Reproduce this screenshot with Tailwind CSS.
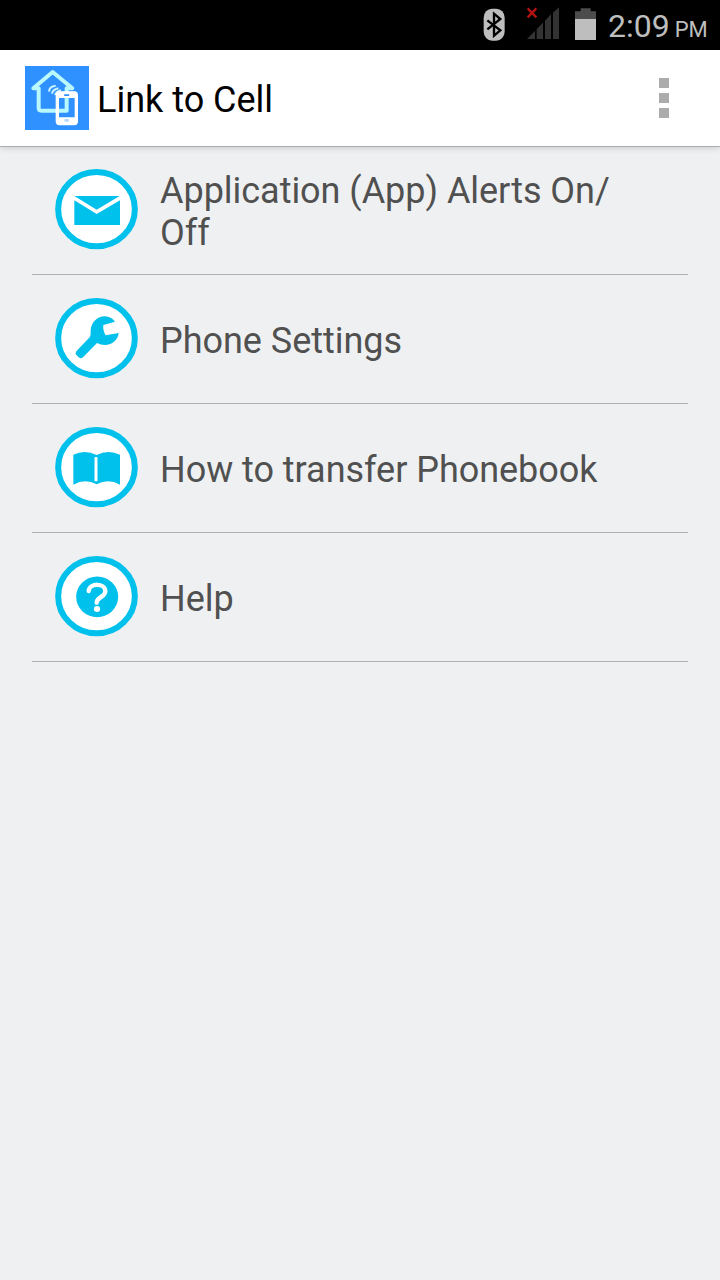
<!DOCTYPE html>
<html lang="en">
<head>
  <meta charset="UTF-8" />
  <meta name="viewport" content="width=device-width, initial-scale=1.0" />
  <title>Link to Cell</title>
  <script src="https://cdn.jsdelivr.net/npm/@tailwindcss/browser@4"></script>
</head>
<body class="h-screen overflow-hidden bg-[#eff0f2] font-[Roboto,sans-serif]">
  <!-- Status bar -->
  <div class="h-[50px] bg-black flex justify-end text-[#bebebe]">
    <svg class="w-[130px] h-[50px] shrink-0" viewBox="0 0 390 150">
      <rect x="41" y="26" width="63" height="96" rx="25" ry="27" fill="#bebebe" />
      <path d="M52 61L91 91L72 107V41L91 57L52 88" fill="none" stroke="#000" stroke-width="7" />
      <path d="M173 25L199 52M199 25L173 52" stroke="#b31212" stroke-width="7" />
      <path d="M171 117L195 92V117ZM200 87L219 68V117H200ZM225 62L243 43V117H225ZM249 38L267 22V117H249Z" fill="#333" />
      <path d="M315 34H332V25H362V34H378V57H315Z" fill="#4c4c4c" />
      <path d="M315 57H378V120H315Z" fill="#bebebe" />
    </svg>
    <div class="w-[120px] flex items-baseline pl-2 pt-[6px] whitespace-nowrap">
      <span class="text-[32px] leading-[40px]">2:09</span>
      <span class="text-[22px] leading-[40px] ml-[5px]">PM</span>
    </div>
  </div>

  <!-- Action bar -->
  <header class="h-[97px] bg-white border-b border-[#abaeaf] flex items-center pl-[25px] pr-[51px] shadow-[0_1px_6px_rgba(0,0,0,0.16)]">
    <svg class="size-16 shrink-0" viewBox="30 30 192 192">
      <rect x="30" y="30" width="192" height="192" fill="#2f90ff" />
      <path d="M71 97H55L113 48L172 97H155V164H79Q71 164 71 156Z" fill="none" stroke="#b9f8fc" stroke-width="12" stroke-linejoin="round" />
      <path d="M102 107Q103 91 122 89M111 113Q113 101 130 97M120 117Q124 106 138 103" fill="none" stroke="#c9f4ff" stroke-width="6" />
      <rect x="127" y="111" width="57" height="92" rx="7" fill="none" stroke="#fff" stroke-width="10" />
      <path d="M127 107H184V126H127ZM127 184H184V206H127Z" fill="#fff" />
      <rect x="147" y="115" width="16" height="5" rx="2" fill="#2f90ff" />
      <rect x="148" y="189" width="14" height="8" rx="3" fill="#b5d8ff" />
    </svg>
    <h1 class="text-[36px] leading-[42px] text-black ml-[8px] mt-[4px]">Link to Cell</h1>
    <div class="ml-auto flex flex-col gap-[5px]">
      <i class="size-[10px] bg-[#acacac]"></i>
      <i class="size-[10px] bg-[#acacac]"></i>
      <i class="size-[10px] bg-[#acacac]"></i>
    </div>
  </header>

  <!-- Menu -->
  <ul class="px-8 text-[36px] leading-[42px] tracking-[-0.03px] text-[#505050]">
    <li class="h-[128px] border-b border-[#b0b1b3] flex pl-[23px] pt-[22px]">
      <svg class="w-[84px] h-[81px] shrink-0" viewBox="30 27 252 243">
        <ellipse cx="154.5" cy="147.5" rx="115" ry="111.5" fill="#fff" stroke="#00c1ec" stroke-width="18" />
        <path d="M88 108H224L155 149ZM88 121L155 162L225 121V195H88Z" fill="#00c1ec" />
      </svg>
      <p class="ml-[21px] mt-[1px]">Application (App) Alerts On/<br>Off</p>
    </li>
    <li class="h-[129px] border-b border-[#b0b1b3] flex pl-[23px] pt-[23px]">
      <svg class="w-[84px] h-[81px] shrink-0" viewBox="30 24 252 243">
        <ellipse cx="154.5" cy="144.5" rx="115" ry="111.5" fill="#fff" stroke="#00c1ec" stroke-width="18" />
        <path d="M94 184L134 142Q138 136 137 124C137 98 156 79 180 79Q198 80 210 95L175 105Q173 121 182 136L221 129C219 149 202 165 180 165Q167 165 156 159L114 202Q108 208 101 202L94 195Q89 190 94 184Z" fill="#00c1ec" />
      </svg>
      <p class="ml-[21px] mt-[22px]">Phone Settings</p>
    </li>
    <li class="h-[129px] border-b border-[#b0b1b3] flex pl-[23px] pt-[23px]">
      <svg class="w-[84px] h-[81px] shrink-0" viewBox="30 27 252 243">
        <ellipse cx="154.5" cy="147.5" rx="115" ry="111.5" fill="#fff" stroke="#00c1ec" stroke-width="18" />
        <path d="M85 110Q120 94 155 111Q190 94 225 110V200Q190 180 155 199Q120 180 85 200Z" fill="#00c1ec" />
        <rect x="148.500" y="117" width="9" height="73" rx="2" fill="#fff" />
      </svg>
      <p class="ml-[21px] mt-[22px]">How to transfer Phonebook</p>
    </li>
    <li class="h-[129px] border-b border-[#b0b1b3] flex pl-[23px] pt-[23px]">
      <svg class="w-[84px] h-[81px] shrink-0" viewBox="30 27 252 243">
        <ellipse cx="154.5" cy="147.5" rx="115" ry="111.5" fill="#fff" stroke="#00c1ec" stroke-width="18" />
        <ellipse cx="156.5" cy="149.5" rx="63" ry="61" fill="#00c1ec" />
        <path d="M131 132C133 107 181 107 181 133C181 152 155 148 155 167" fill="none" stroke="#fff" stroke-width="13" stroke-linecap="round" />
        <ellipse cx="156" cy="186" rx="9.5" ry="9" fill="#fff" />
      </svg>
      <p class="ml-[21px] mt-[22px]">Help</p>
    </li>
  </ul>
</body>
</html>
